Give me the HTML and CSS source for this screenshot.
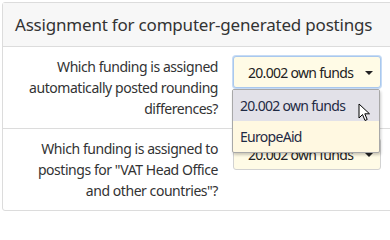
FILE: index.html
```html
<!DOCTYPE html>
<html>
<head>
<meta charset="utf-8">
<link rel="stylesheet" href="styles.css">
</head>
<body>
<div class="viewport">
<div class="card">
  <div class="card-header">Assignment for computer-generated postings</div>
  <div class="row">
    <div class="label">Which funding is assigned<br>automatically posted rounding<br>differences?</div>
    <div class="field">
      <div class="select focused"><span class="value">20.002 own funds</span><span class="caret"></span></div>
      <div class="dropdown">
        <div class="option active"><span>20.002 own funds</span>
          <svg class="cursor" width="13" height="19" viewBox="0 0 13 19"><path d="M1 1 L1 15 L4.5 11.5 L7 17.5 L9.2 16.5 L6.8 10.8 L11.5 10.8 Z" fill="#fff" stroke="#000" stroke-width="1" stroke-linejoin="round"/></svg>
        </div>
        <div class="option">EuropeAid</div>
      </div>
    </div>
  </div>
  <div class="row">
    <div class="label">Which funding is assigned to<br>postings for "VAT Head Office<br>and other countries"?</div>
    <div class="field">
      <div class="select"><span class="value">20.002 own funds</span><span class="caret"></span></div>
    </div>
  </div>
</div>
</div>
</body>
</html>
```

FILE: styles.css
```css
html, body {
  margin: 0;
  padding: 0;
  background: #fff;
}
body {
  font-family: "Noto Sans", "Open Sans", sans-serif;
  color: #333;
}
.viewport {
  width: 390px;
  height: 213px;
  overflow: hidden;
}
.card {
  margin: 2px 0 0 2px;
  width: 400px;
  border: 1px solid #dcdcdc;
  border-radius: 3px;
  background: #fff;
}
.card-header {
  height: 43px;
  display: flex;
  align-items: center;
  padding: 0 12px;
  background: #f7f7f7;
  border-bottom: 1px solid #dcdcdc;
  font-size: 17px;
  letter-spacing: -0.2px;
  color: #333;
  white-space: nowrap;
}
.row {
  display: flex;
  gap: 15px;
  padding: 9px 0;
}
.row + .row {
  border-top: 1px solid #dcdcdc;
}
.label {
  width: 215px;
  text-align: right;
  font-size: 14px;
  line-height: 21px;
  letter-spacing: -0.45px;
  color: #333;
  white-space: nowrap;
}
.field {
  position: relative;
  width: 148px;
}
.select {
  box-sizing: border-box;
  height: 32px;
  border: 1px solid #d2d2d2;
  border-radius: 3px;
  background: #fffbe6;
  display: flex;
  align-items: center;
  justify-content: space-between;
  padding: 0 7px 0 14px;
  font-size: 14px;
  letter-spacing: -0.7px;
  color: #222;
  white-space: nowrap;
}
.select.focused {
  border-color: #a9c8ee;
  box-shadow: 0 0 0 1px #c6dbf5;
}
.caret {
  width: 0;
  height: 0;
  border-left: 4px solid transparent;
  border-right: 4px solid transparent;
  border-top: 4px solid #222;
  margin-top: 1px;
}
.dropdown {
  position: absolute;
  left: -1px;
  top: 33px;
  width: 146px;
  border: 1px solid #a8a8a8;
  border-radius: 2px;
  background: #fff8e1;
  box-shadow: 1px 2px 3px rgba(0,0,0,0.2);
  z-index: 2;
}
.option {
  height: 31px;
  display: flex;
  align-items: center;
  padding: 0 7px;
  font-size: 14px;
  letter-spacing: -0.7px;
  color: #1f2a44;
  position: relative;
  white-space: nowrap;
}
.option.active {
  background: #e2e1e8;
}
.cursor {
  position: absolute;
  left: 125px;
  top: 13px;
}
```
